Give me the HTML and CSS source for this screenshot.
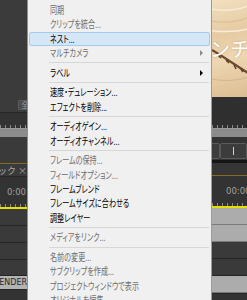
FILE: index.html
```html
<!DOCTYPE html>
<html lang="ja">
<head>
<meta charset="utf-8">
<link rel="stylesheet" href="styles.css">
</head>
<body>
<div class="screen">
  <div class="lp">
    <div class="lp-top"><div class="lp-btn">全</div></div>
    <div class="ln"></div>
    <div class="ruler lp-ruler"></div>
    <div class="graybar"></div>
    <div class="lp-dark1"></div>
    <div class="gold"></div>
    <div class="lp-label"><span>ィック ×</span></div>
    <div class="ln"></div>
    <div class="lp-time ruler"><span>0:00</span></div>
    <div class="yellow"></div>
    <div class="trk dark"></div>
    <div class="trk dark"></div>
    <div class="trk dark"></div>
    <div class="trk dark short"></div>
    <div class="render"><span>RENDER</span></div>
    <div class="lp-rest"></div>
  </div>

  <div class="menu">
    <div class="it dis"><span class="t">同期</span></div>
    <div class="it dis"><span class="t">クリップを統合...</span></div>
    <div class="it hl"><span class="t">ネスト...</span></div>
    <div class="it dis sub"><span class="t">マルチカメラ</span><span class="arr"></span></div>
    <div class="sep"></div>
    <div class="it sub"><span class="t">ラベル</span><span class="arr"></span></div>
    <div class="sep"></div>
    <div class="it"><span class="t">速度・デュレーション...</span></div>
    <div class="it"><span class="t">エフェクトを削除...</span></div>
    <div class="sep"></div>
    <div class="it"><span class="t">オーディオゲイン...</span></div>
    <div class="it"><span class="t">オーディオチャンネル...</span></div>
    <div class="sep"></div>
    <div class="it dis"><span class="t">フレームの保持...</span></div>
    <div class="it dis"><span class="t">フィールドオプション...</span></div>
    <div class="it"><span class="t">フレームブレンド</span></div>
    <div class="it"><span class="t">フレームサイズに合わせる</span></div>
    <div class="it"><span class="t">調整レイヤー</span></div>
    <div class="sep"></div>
    <div class="it dis"><span class="t">メディアをリンク...</span></div>
    <div class="sep"></div>
    <div class="it dis"><span class="t">名前の変更...</span></div>
    <div class="it dis"><span class="t">サブクリップを作成...</span></div>
    <div class="it dis"><span class="t">プロジェクトウィンドウで表示</span></div>
    <div class="it dis"><span class="t">オリジナルを編集</span></div>
  </div>

  <div class="rp">
    <div class="rp-img">
      <svg class="wood" width="35" height="97" viewBox="0 0 35 97">
        <path d="M-5 8 Q20 14 40 4" stroke="#f7ead6" stroke-width="1.5" fill="none"/>
        <path d="M-5 20 Q18 26 40 16" stroke="#d9bb90" stroke-width="1" fill="none"/>
        <path d="M-5 30 Q20 34 40 28" stroke="#f8ecda" stroke-width="1.5" fill="none"/>
        <path d="M-5 78 Q18 84 40 76" stroke="#d6b68a" stroke-width="1" fill="none"/>
        <path d="M0 50 C10 56 22 64 36 73" stroke="#6b4a30" stroke-width="2.2" fill="none"/>
        <path d="M6 55 L9 58 M14 60 L17 63 M22 65 L24 69 M29 69 L31 72" stroke="#5a3b24" stroke-width="1.5"/>
      </svg>
      <span class="img-text">ンチ</span>
    </div>
    <div class="rp-dark1 ruler"></div>
    <div class="graybar"></div>
    <div class="rp-btns">
      <div class="btn b1"></div>
      <div class="btn b2"><span class="bar"></span></div>
    </div>
    <div class="rp-black"></div>
    <div class="rp-dark2"></div>
    <div class="gold"></div>
    <div class="rp-time ruler"><span>00:00</span></div>
    <div class="yellow"></div>
    <div class="trk light"></div>
    <div class="trk light"></div>
    <div class="trk dark"></div>
    <div class="trk dark"></div>
    <div class="trk light"></div>
    <div class="lp-rest"></div>
  </div>
</div>
</body>
</html>
```

FILE: styles.css
```css
* { box-sizing: border-box; }
html, body { margin: 0; padding: 0; }
body {
  width: 247px;
  height: 300px;
  overflow: hidden;
  background: #3a3a3a;
  font-family: "Noto Sans CJK JP", "Noto Sans", sans-serif;
}
.screen {
  display: grid;
  grid-template-columns: 27px 185px 35px;
  height: 300px;
  overflow: hidden;
}

/* left panel */
.lp, .rp { display: flex; flex-direction: column; overflow: hidden; background: #383838; }
.lp-top {
  height: 112px;
  background: #3b3b3b;
  display: flex;
  align-items: flex-end;
  justify-content: flex-end;
  padding-bottom: 2px;
}
.lp-btn {
  width: 9px; height: 10px;
  background: #4b4b4b;
  border: 1px solid #5c5c5c;
  border-right: none;
  border-radius: 2px 0 0 2px;
  color: #9a9a9a;
  font-size: 8px;
  line-height: 8px;
  padding-left: 2px;
  overflow: hidden;
}
.ln { height: 1px; background: #262626; }
.ruler {
  background-color: #333;
  background-image: repeating-linear-gradient(90deg, #8a8a8a 0 1px, transparent 1px 5px);
  background-size: 100% 3px;
  background-position: 0 100%;
  background-repeat: no-repeat;
}
.lp-ruler { height: 15px; }
.graybar { height: 9px; background: #8b8b8b; border-top: 1px solid #9a9a9a; }
.lp-dark1 { height: 26px; background: #3a3a3a; }
.gold { height: 1px; background: #8a6a22; }
.lp-label {
  height: 12px;
  display: flex;
  justify-content: flex-end;
  align-items: center;
  white-space: nowrap;
  color: #a8a8a8;
  font-size: 9px;
  background: #3a3a3a;
}
.lp-time, .rp-time {
  height: 30px;
  display: flex;
  align-items: center;
  color: #a0a0a0;
  font-family: "DejaVu Sans", sans-serif;
  font-size: 8.5px;
  white-space: nowrap;
}
.lp-time { justify-content: flex-end; padding-right: 1px; }
.rp-time { padding-left: 14px; }
.yellow { height: 2px; background: #e6e000; }
.trk { height: 17px; border-bottom: 1px solid #262626; }
.trk.short { height: 16px; }
.dark { background: #3a3a3a; }
.light { background: #acacac; border-bottom-color: #7a7a7a; }
.render {
  height: 13px;
  background: #b3b3b3;
  display: flex;
  justify-content: flex-end;
  align-items: center;
  white-space: nowrap;
  color: #2a2a2a;
  font-family: "DejaVu Sans", sans-serif;
  font-size: 8px;
}
.lp-rest { flex: 1; background: #333; border-top: 1px solid #262626; }

/* menu */
.menu {
  background: #f0f0f0;
  border-left: 1px solid #8f8f8f;
  border-right: 1px solid #9a9a9a;
  padding: 3px 1px 0;
  display: flex;
  flex-direction: column;
  overflow: hidden;
}
.it {
  flex: none;
  height: 14.33px;
  border: 1px solid transparent;
  border-radius: 2px;
  padding-left: 20px;
  display: flex;
  align-items: center;
  position: relative;
  color: #000;
  font-size: 10px;
  line-height: 12px;
  white-space: nowrap;
}
.it.dis { color: #6d6d6d; }
.it.hl { background: #d5e6f7; border-color: #a3cbf0; }
.t {
  display: inline-block;
  transform: scaleX(0.71);
  transform-origin: left center;
  font-feature-settings: "palt";
}
.arr {
  position: absolute;
  right: 6px;
  top: 50%;
  margin-top: -3px;
  width: 0; height: 0;
  border-left: 3px solid #000;
  border-top: 3px solid transparent;
  border-bottom: 3px solid transparent;
}
.it.dis .arr { border-left-color: #8a8a8a; }
.sep {
  flex: none;
  height: 5.33px;
  margin: 0 1px 0 20px;
  display: flex;
  align-items: center;
}
.sep::before {
  content: "";
  display: block;
  width: 100%;
  height: 1px;
  background: #d7d7d7;
}

/* right panel */
.rp-img {
  height: 97px;
  position: relative;
  background: linear-gradient(165deg, #f1dfc0 0%, #e6cba2 35%, #edd6b2 60%, #dcbd92 100%);
  overflow: hidden;
}
.wood { display: block; }
.img-text {
  position: absolute;
  left: -2px;
  top: 38px;
  color: #fff;
  font-size: 20px;
  line-height: 22px;
  white-space: nowrap;
  text-shadow: 0 0 2px rgba(120,80,40,0.4);
}
.rp-dark1 { height: 31px; background-color: #2f2f2f; }
.rp-btns {
  height: 23px;
  background: #333;
  display: flex;
  align-items: flex-end;
  padding-bottom: 1px;
}
.btn {
  height: 16px;
  background: #3c3c3c;
  border: 1px solid #5a5a5a;
  border-radius: 2px;
}
.b1 { width: 8px; border-left: none; border-radius: 0 2px 2px 0; }
.b2 { flex: 1; display: flex; justify-content: center; align-items: center; }
.bar { width: 1px; height: 8px; background: #cfcfcf; }
.rp-black { height: 3px; background: #151515; }
.rp-dark2 { height: 12px; background: #353535; }
```
